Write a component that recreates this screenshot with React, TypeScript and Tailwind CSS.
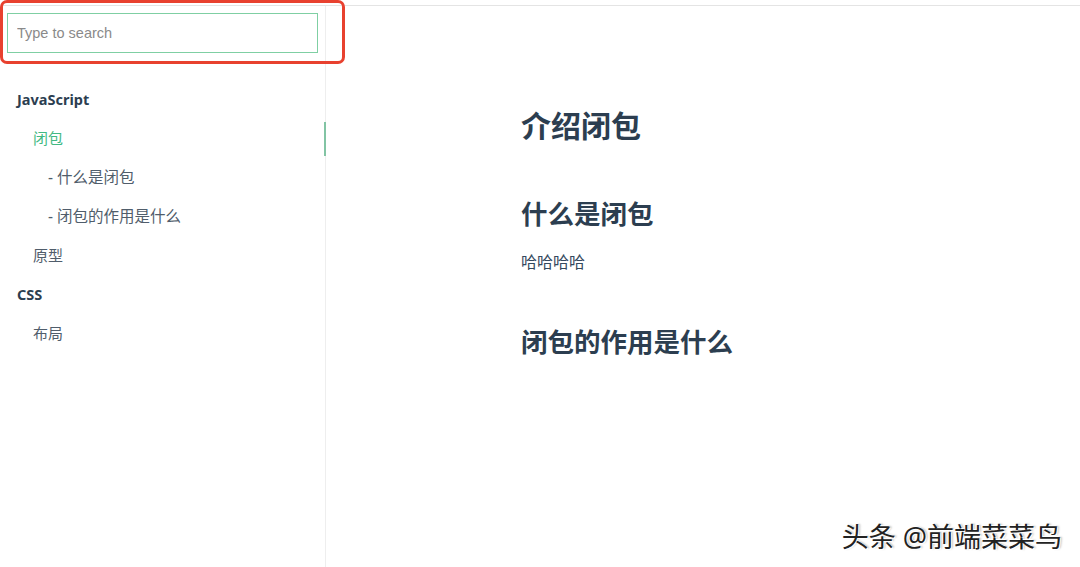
const sans = { fontFamily: '"Noto Sans", "Noto Sans CJK SC", sans-serif' };

type Item = { label: string; level: 0 | 1 | 2; active?: boolean };

const items: Item[] = [
  { label: "JavaScript", level: 0 },
  { label: "闭包", level: 1, active: true },
  { label: "- 什么是闭包", level: 2 },
  { label: "- 闭包的作用是什么", level: 2 },
  { label: "原型", level: 1 },
  { label: "CSS", level: 0 },
  { label: "布局", level: 1 },
];

function Sidebar() {
  return (
    <aside className="relative flex w-[326px] shrink-0 flex-col border-r border-[#eeeeee]">
      <div className="px-[7px] pt-[7px]">
        <input
          type="text"
          placeholder="Type to search"
          className="h-[40px] w-[311px] border border-[#7fcfa3] px-[9px] text-[14.5px] text-[#555] outline-none placeholder:text-[#8a8a8a]"
          style={{ fontFamily: '"Liberation Sans", Arial, sans-serif' }}
        />
      </div>
      <ul className="mt-[27px] flex flex-col">
        {items.map((it) => (
          <li
            key={it.label}
            className={
              "relative flex h-[39px] items-center " +
              (it.level === 0
                ? "pl-[17px] text-[14.5px] font-bold text-[#2c3e50]"
                : it.level === 1
                  ? "pl-[33px] text-[15px] text-[#505d6b]"
                  : "pl-[48px] text-[15.5px] text-[#505d6b]")
            }
          >
            <span className={it.active ? "text-[#42b983]" : ""}>{it.label}</span>
            {it.active && <span className="absolute right-[-1px] top-[3px] h-[34px] w-[2px] bg-[#82c4a4]" />}
          </li>
        ))}
      </ul>
    </aside>
  );
}

function Content() {
  return (
    <main className="flex-1 pl-[195px] pt-[98px] text-[#2c3e50]">
      <h1 className="text-[30px] font-semibold leading-[44px]">介绍闭包</h1>
      <h2 className="mt-[47px] text-[26.5px] font-semibold leading-[38px]">什么是闭包</h2>
      <p className="mt-[17px] text-[16px] leading-[24px] text-[#34495e]">哈哈哈哈</p>
      <h2 className="mt-[49px] text-[26.5px] font-semibold leading-[38px]">闭包的作用是什么</h2>
    </main>
  );
}

export default function App() {
  return (
    <div className="relative h-[567px] w-[1080px] overflow-hidden bg-white" style={sans}>
      <div className="mt-[5px] flex h-[562px] border-t border-[#e4e4e4]">
        <Sidebar />
        <Content />
      </div>
      {/* annotation box */}
      <div className="pointer-events-none absolute left-0 top-0 h-[64px] w-[345px] rounded-[7px] border-[3px] border-[#e8412f]" />
      {/* watermark */}
      <div
        className="absolute bottom-[13px] right-[18px] text-[27px] leading-[34px] text-[#222]"
        style={{ textShadow: "1px 1px 0 #fff, -1px -1px 0 #fff, 2px 0 2px rgba(0,0,0,0.25)" }}
      >
        头条 @前端菜菜鸟
      </div>
    </div>
  );
}
